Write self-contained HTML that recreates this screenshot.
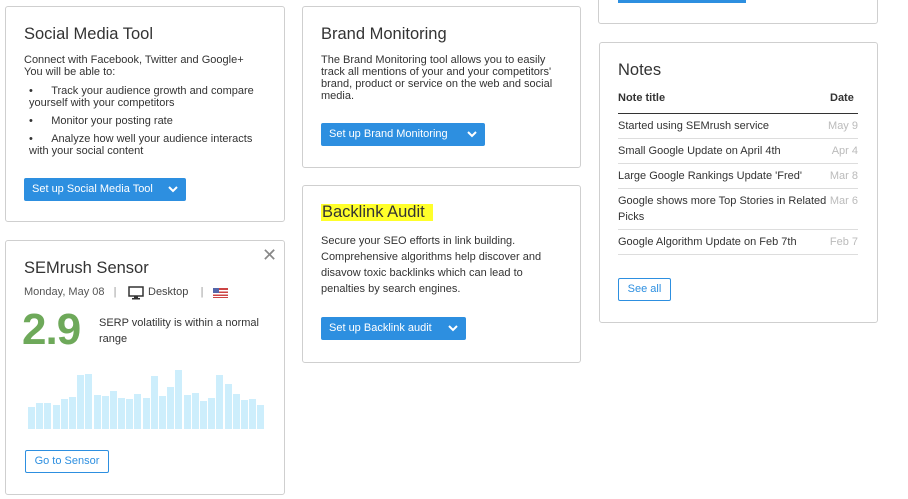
<!DOCTYPE html><html><head><style>
body{margin:0;width:908px;height:499px;background:#fff;position:relative;overflow:hidden;font-family:"Liberation Sans",sans-serif;color:#333}
.c{position:absolute;border:1px solid #cfcfcf;border-radius:3px;background:#fff;box-sizing:border-box}
.a{position:absolute;white-space:nowrap}
h2{position:absolute;margin:0;font-weight:normal;font-size:16.5px;color:#333;white-space:nowrap}
.t{font-size:11px;line-height:12px;color:#333}
.btn{position:absolute;background:#2d8fe0;color:#fff;font-size:11px;height:23px;line-height:23px;border-radius:2px;padding-left:8px;box-sizing:border-box}
.btn svg{position:absolute;right:8px;top:8px}
.ob{position:absolute;border:1px solid #2d8fe0;color:#2d8fe0;border-radius:2px;font-size:11px;text-align:center;box-sizing:border-box}
.row{position:absolute;left:18px;width:240px;border-bottom:1px solid #ddd;font-size:11px;line-height:16px}
.row span{position:absolute;right:0;top:0;color:#bbb}
</style></head><body>
<div class="c" style="left:5px;top:6px;width:280px;height:216px">
<h2 style="left:18px;top:18px">Social Media Tool</h2>
<div class="a t" style="left:18px;top:47px">Connect with Facebook, Twitter and Google+<br>You will be able to:</div>
<div class="a t" style="left:23px;top:78px">•&nbsp;&nbsp;&nbsp;&nbsp;&nbsp;&nbsp;Track your audience growth and compare<br>yourself with your competitors</div>
<div class="a t" style="left:23px;top:108px">•&nbsp;&nbsp;&nbsp;&nbsp;&nbsp;&nbsp;Monitor your posting rate</div>
<div class="a t" style="left:23px;top:126px">•&nbsp;&nbsp;&nbsp;&nbsp;&nbsp;&nbsp;Analyze how well your audience interacts<br>with your social content</div>
<div class="btn" style="left:18px;top:171px;width:162px">Set up Social Media Tool<svg width="10" height="7"><path d="M1 1l4 4 4-4" stroke="#fff" stroke-width="2" fill="none"/></svg></div>
</div>
<div class="c" style="left:5px;top:240px;width:280px;height:255px">
<div class="a" style="left:256px;top:4px;font-size:18px;color:#888">✕</div>
<h2 style="left:18px;top:18px">SEMrush Sensor</h2>
<div class="a" style="left:18px;top:45px;font-size:11px;color:#555">Monday, May 08 &nbsp;&nbsp;<span style="color:#999">|</span></div>
<svg class="a" style="left:122px;top:45px" width="16" height="14"><rect x="1" y="1" width="14" height="9" fill="none" stroke="#333" stroke-width="1.5"/><rect x="6" y="10" width="4" height="2" fill="#333"/><rect x="4" y="12" width="8" height="1.5" fill="#333"/></svg>
<div class="a" style="left:142px;top:45px;font-size:11px;color:#444">Desktop &nbsp;&nbsp;&nbsp;<span style="color:#999">|</span></div>
<svg class="a" style="left:207px;top:47px" width="15" height="10"><rect width="15" height="10" fill="#c44"/><rect y="2" width="15" height="1.5" fill="#fff"/><rect y="5" width="15" height="1.5" fill="#fff"/><rect y="8" width="15" height="1" fill="#fff"/><rect width="6" height="5" fill="#56a"/></svg>
<div class="a" style="left:16px;top:64px;font-size:44px;font-weight:bold;color:#6ea95a;letter-spacing:-1px">2.9</div>
<div class="a t" style="left:93px;top:74px;line-height:16px">SERP volatility is within a normal<br>range</div>
<div class="a" style="left:22px;top:128px;display:flex;align-items:flex-end;height:60px;gap:1.2px">
<div style="width:7px;height:22px;background:#cdeefc"></div><div style="width:7px;height:26px;background:#cdeefc"></div><div style="width:7px;height:26px;background:#cdeefc"></div><div style="width:7px;height:24px;background:#cdeefc"></div><div style="width:7px;height:30px;background:#cdeefc"></div><div style="width:7px;height:32px;background:#cdeefc"></div><div style="width:7px;height:54px;background:#cdeefc"></div><div style="width:7px;height:55px;background:#cdeefc"></div><div style="width:7px;height:34px;background:#cdeefc"></div><div style="width:7px;height:33px;background:#cdeefc"></div><div style="width:7px;height:38px;background:#cdeefc"></div><div style="width:7px;height:31px;background:#cdeefc"></div><div style="width:7px;height:30px;background:#cdeefc"></div><div style="width:7px;height:35px;background:#cdeefc"></div><div style="width:7px;height:31px;background:#cdeefc"></div><div style="width:7px;height:53px;background:#cdeefc"></div><div style="width:7px;height:33px;background:#cdeefc"></div><div style="width:7px;height:42px;background:#cdeefc"></div><div style="width:7px;height:59px;background:#cdeefc"></div><div style="width:7px;height:34px;background:#cdeefc"></div><div style="width:7px;height:36px;background:#cdeefc"></div><div style="width:7px;height:28px;background:#cdeefc"></div><div style="width:7px;height:31px;background:#cdeefc"></div><div style="width:7px;height:54px;background:#cdeefc"></div><div style="width:7px;height:45px;background:#cdeefc"></div><div style="width:7px;height:35px;background:#cdeefc"></div><div style="width:7px;height:29px;background:#cdeefc"></div><div style="width:7px;height:30px;background:#cdeefc"></div><div style="width:7px;height:24px;background:#cdeefc"></div>
</div>
<div class="ob" style="left:19px;top:209px;width:84px;height:23px;line-height:21px">Go to Sensor</div>
</div>
<div class="c" style="left:302px;top:6px;width:279px;height:162px">
<h2 style="left:18px;top:18px">Brand Monitoring</h2>
<div class="a t" style="left:18px;top:47px">The Brand Monitoring tool allows you to easily<br>track all mentions of your and your competitors'<br>brand, product or service on the web and social<br>media.</div>
<div class="btn" style="left:18px;top:116px;width:164px">Set up Brand Monitoring<svg width="10" height="7"><path d="M1 1l4 4 4-4" stroke="#fff" stroke-width="2" fill="none"/></svg></div>
</div>
<div class="c" style="left:302px;top:185px;width:279px;height:178px">
<div class="a" style="left:18px;top:18px;width:112px;height:17px;background:#ffff2a"></div>
<h2 style="left:19px;top:17px">Backlink Audit</h2>
<div class="a t" style="left:18px;top:47px;line-height:16px">Secure your SEO efforts in link building.<br>Comprehensive algorithms help discover and<br>disavow toxic backlinks which can lead to<br>penalties by search engines.</div>
<div class="btn" style="left:18px;top:131px;width:145px">Set up Backlink audit<svg width="10" height="7"><path d="M1 1l4 4 4-4" stroke="#fff" stroke-width="2" fill="none"/></svg></div>
</div>
<div class="c" style="left:598px;top:-10px;width:280px;height:34px">
<div class="a" style="left:19px;top:8px;width:128px;height:4px;background:#2d8fe0"></div>
</div>
<div class="c" style="left:599px;top:42px;width:279px;height:281px">
<h2 style="left:18px;top:18px">Notes</h2>
<div class="a" style="left:18px;top:49px;font-size:11px;font-weight:bold;color:#333">Note title</div>
<div class="a" style="left:230px;top:49px;font-size:11px;font-weight:bold;color:#333">Date</div>
<div class="a" style="left:18px;top:70px;width:240px;height:1px;background:#333"></div>
<div class="row" style="top:75px;height:20px">Started using SEMrush service<span>May 9</span></div>
<div class="row" style="top:100px;height:20px">Small Google Update on April 4th<span>Apr 4</span></div>
<div class="row" style="top:125px;height:20px">Large Google Rankings Update 'Fred'<span>Mar 8</span></div>
<div class="row" style="top:150px;height:36px">Google shows more Top Stories in Related<br>Picks<span>Mar 6</span></div>
<div class="row" style="top:191px;height:20px">Google Algorithm Update on Feb 7th<span>Feb 7</span></div>
<div class="ob" style="left:18px;top:235px;width:53px;height:23px;line-height:21px">See all</div>
</div>
</body></html>
